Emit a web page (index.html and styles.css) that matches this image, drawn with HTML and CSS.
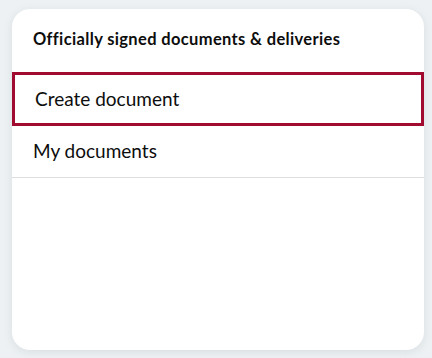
FILE: index.html
```html
<!DOCTYPE html>
<html lang="en">
<head>
<meta charset="utf-8">
<link rel="stylesheet" href="styles.css">
</head>
<body>
<div class="card">
  <div class="card-title">Officially signed documents &amp; deliveries</div>
  <nav class="menu">
    <a class="menu-item active">Create document</a>
    <a class="menu-item">My documents</a>
  </nav>
</div>
</body>
</html>
```
FILE: styles.css
```css
html, body {
  margin: 0;
  padding: 0;
}
body {
  background: #edf1f3;
  font-family: "Source Sans Pro", "Lato", "Noto Sans", sans-serif;
  color: #0d0d0d;
  padding: 9px 8px 8px 12px;
  height: 358px;
  box-sizing: border-box;
}
.card {
  width: 412px;
  height: 341px;
  background: #fff;
  border-radius: 18px;
  box-shadow: 0 2px 8px rgba(120, 140, 150, 0.18);
  overflow: hidden;
  display: flex;
  flex-direction: column;
}
.card-title {
  height: 63px;
  display: flex;
  align-items: center;
  padding-left: 21px;
  font-size: 16.5px;
  letter-spacing: 0.35px;
  font-weight: 700;
  box-sizing: border-box;
  padding-bottom: 4px;
}
.menu {
  display: flex;
  flex-direction: column;
}
.menu-item {
  display: flex;
  align-items: center;
  padding-left: 21px;
  padding-bottom: 2px;
  font-size: 19px;
  height: 52px;
  box-sizing: border-box;
  border-bottom: 1px solid #dedede;
}
.menu-item.active {
  height: 54px;
  border: 3px solid #a10b30;
  padding-left: 20px;
}
```
